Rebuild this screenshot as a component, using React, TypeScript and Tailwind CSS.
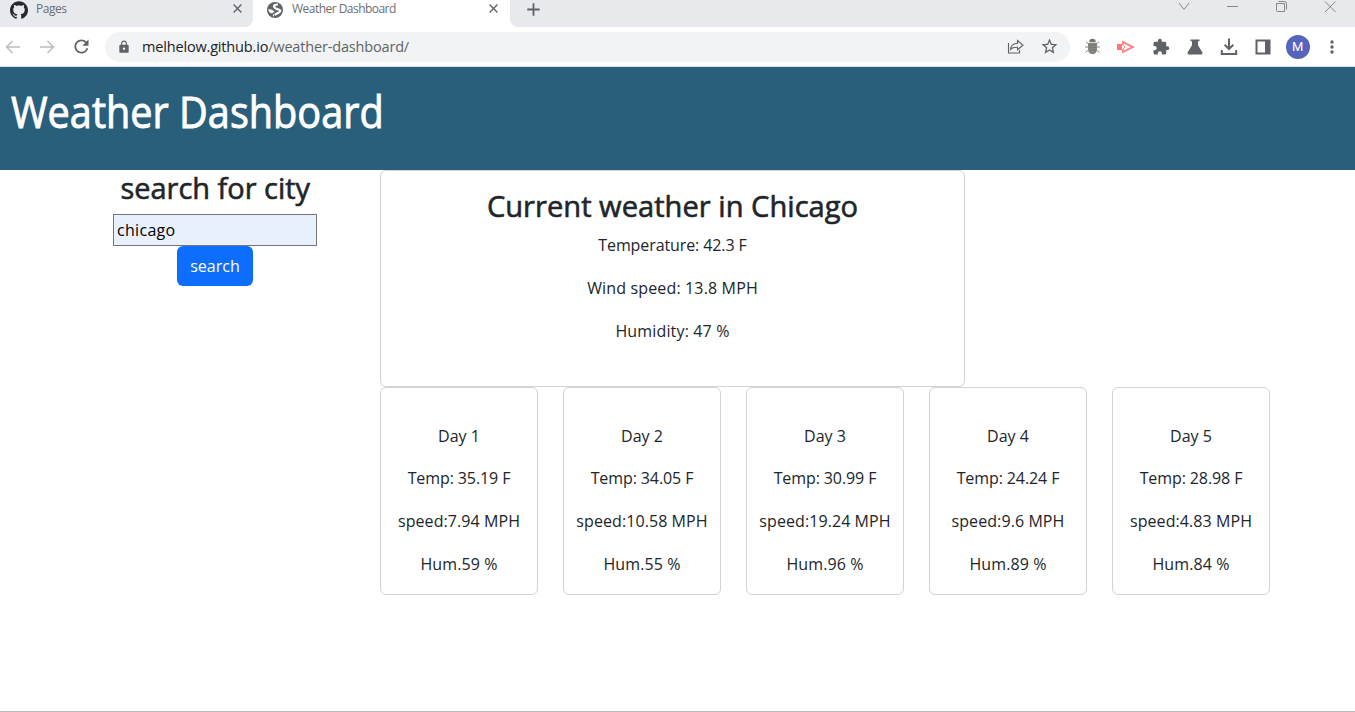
import { MdExtension, MdLock, MdRefresh, MdStarBorder } from 'react-icons/md';
import { SiGithub } from 'react-icons/si';

const days = [
  { day: 1, temp: '35.19', speed: '7.94', hum: 59 },
  { day: 2, temp: '34.05', speed: '10.58', hum: 55 },
  { day: 3, temp: '30.99', speed: '19.24', hum: 96 },
  { day: 4, temp: '24.24', speed: '9.6', hum: 89 },
  { day: 5, temp: '28.98', speed: '4.83', hum: 84 },
];

function CloseIcon() {
  return (
    <svg className="h-[9px] w-[9px] shrink-0" viewBox="0 0 9 9" fill="none" stroke="#5f6368" strokeWidth="1.4">
      <path d="M.6.6l7.8 7.8M8.4.6L.6 8.4" />
    </svg>
  );
}

function GlobeIcon() {
  return (
    <svg className="mt-[2px] h-[16px] w-[16px]" viewBox="0 0 16 16">
      <circle cx="8" cy="8" r="8" fill="#5f6368" />
      <path d="M11 2.500Q6.500 2.500 7 4.500T11.500 7.500 11 11 7 13.500" fill="none" stroke="#fff" strokeWidth="2.2" />
      <path d="M1.500 7Q5.500 7 7.500 9.500L5 11.500Q1.500 11 1.500 7z" fill="#fff" />
    </svg>
  );
}

function TabStrip() {
  return (
    <div className="flex h-[27px] text-[12px] text-[#6b6e72]">
      <div className="flex h-[27px] w-[253px] rounded-br-lg bg-[#e7e9ed] pt-px pl-2.5 pr-[11px]">
        <SiGithub className="h-[18px] w-[18px] text-[#24292f]" />
        <span className="ml-2 flex-1 leading-[16px] tracking-[-0.5px]">Pages</span>
        <div className="pt-[3px]"><CloseIcon /></div>
      </div>
      <div className="flex h-[27px] w-[257px] pl-[14px] pr-[12px]">
        <GlobeIcon />
        <span className="ml-[9px] flex-1 pt-px leading-[16px] tracking-[-0.53px]">Weather Dashboard</span>
        <div className="pt-1"><CloseIcon /></div>
      </div>
      <div className="flex h-[27px] flex-1 rounded-bl-lg bg-[#e7e9ed] pl-[17px]">
        <svg className="mt-[3px] h-[13px] w-[13px]" viewBox="0 0 13 13" stroke="#5f6368" strokeWidth="1.8">
          <path d="M6.5.3v12.4M.3 6.5h12.4" />
        </svg>
        <svg className="ml-auto h-[14px] w-[176px]" viewBox="0 0 176 14" fill="none" stroke="#85878b" strokeWidth="1">
          <path d="M0 3l5 6.500 5-6.500M48 6.500h11M97.500 3.500h8v8h-7q-1 0-1-1zM99.500 1.500h6q2 0 2 2v6M146 1.500l10.500 10.500M156.500 1.500L146 12" />
        </svg>
      </div>
    </div>
  );
}

function Toolbar() {
  return (
    <div className="flex h-10 items-center border-b border-[#dadce0] bg-white">
      <svg className="ml-[5px] h-4 w-[50px]" viewBox="0 0 50 16" fill="none" stroke="#babcbe" strokeWidth="1.5">
        <path d="M15 8H1.500M7.500 2l-6 6 6 6M35 8h13.500M42.500 2l6 6-6 6" />
      </svg>
      <MdRefresh className="ml-4 h-[21px] w-[21px] text-[#5f6368]" />
      <div className="ml-[13px] flex h-[30px] w-[965px] items-center rounded-full bg-[#f1f3f4] pl-[12px]">
        <MdLock className="h-[14px] w-[14px] text-[#5f6368]" />
        <div className="ml-[11px] flex-1 text-[14.5px] leading-5 tracking-[-0.17px] text-[#5f6368]">
          <span className="text-[#202124]">melhelow.github.io</span>/weather-dashboard/
        </div>
        <svg className="h-[15px] w-[17px]" viewBox="0 0 17 15" fill="none" stroke="#5f6368" strokeWidth="1.1">
          <path d="M1.500 4v10h11v-3M3.500 10.500C4 6.500 6.500 4.500 10.500 4.300V1.500l5.500 4.800-5.500 4.500V8.300C7 8.200 5 8.800 3.500 10.500z" />
        </svg>
        <MdStarBorder className="mr-[11px] ml-[16px] h-[19px] w-[19px] text-[#5f6368]" />
      </div>
      <div className="ml-[5px] grid w-[274px] grid-cols-8 place-items-center">
        <svg className="h-[17px] w-[17px]" viewBox="0 0 17 17">
          <g fill="none" stroke="#8b8b89" strokeWidth="1"><path d="M5 6L2 4M12 6l3-2M4 9H1M13 9h3M4.500 12l-3 2.500M12.500 12l3 2.500" /></g>
          <path d="M5.200 4.200Q5.200.800 8.500.800t3.300 3.400z" fill="#77776f" />
          <path d="M4 5h9v6q0 5-4.500 5.300Q4 16 4 11z" fill="#858581" />
          <path d="M5 7h7M5 9.500h7M5 12h7" stroke="#747470" strokeWidth=".7" />
        </svg>
        <svg className="h-[14px] w-[18px]" viewBox="0 0 18 14">
          <path d="M0 4h5v6H0z" fill="#ff7478" />
          <path d="M6 4.500V2L16 7 6 12V9.500" fill="none" stroke="#ff8587" strokeWidth="2" />
          <path d="M5 4l3 3-3 3" fill="none" stroke="#ff8587" strokeWidth="1" />
        </svg>
        <MdExtension className="h-[18px] w-[18px] text-[#5f6368]" />
        <svg className="h-4 w-4" viewBox="0 0 16 16" fill="#5f6368">
          <path d="M3.500.500h9v1.800H11v4l4.300 7q.7 2.200-1.300 2.200H2q-2 0-1.300-2.200l4.300-7v-4H3.500z" />
        </svg>
        <svg className="h-[18px] w-[18px]" viewBox="0 0 18 18" fill="none" stroke="#5f6368" strokeWidth="2">
          <path d="M9 .500v10M4.700 6.800L9 11l4.300-4.200M1.800 12v4h14.400v-4" />
        </svg>
        <svg className="h-4 w-4" viewBox="0 0 16 16" fill="#5f6368" fillRule="evenodd">
          <path d="M.500.500h15v15H.500zM2.500 2.500v11h7.500v-11z" />
        </svg>
        <div className="flex h-6 w-6 items-center justify-center rounded-full bg-[#5764bd] font-['Roboto',sans-serif] text-[13px] text-white">M</div>
        <svg className="h-[14px] w-1" viewBox="0 0 4 14" fill="#5f6368">
          <circle cx="2" cy="2" r="1.700" /><circle cx="2" cy="7" r="1.700" /><circle cx="2" cy="12" r="1.700" />
        </svg>
      </div>
    </div>
  );
}

export default function App() {
  return (
    <div className="flex h-[712px] w-[1355px] flex-col overflow-hidden border-b border-[#b3b8bb] bg-white font-['Open_Sans','Noto_Sans',sans-serif] text-[#212529]">
      <TabStrip />
      <Toolbar />
      <header className="h-[103px] shrink-0 bg-[#2a5f7b] pt-[19px] pl-[11px]">
        <h1 className="origin-left scale-x-[0.922] text-[43px] leading-[52px] text-white [-webkit-text-stroke:0.9px_white]">Weather Dashboard</h1>
      </header>
      <main className="flex">
        <section className="flex w-[380px] flex-col items-center pl-[50px]">
          <h2 className="h-11 scale-x-[0.965] text-[30px] leading-[36px] whitespace-nowrap [-webkit-text-stroke:0.6px_#212529]">search for city</h2>
          <input
            className="h-8 w-[204px] border border-[#767676] bg-[#e8f0fe] px-[3px] text-[16px] tracking-[0.3px] text-black"
            defaultValue="chicago"
          />
          <button className="h-10 w-[76px] rounded-md bg-[#0d6efd] text-[16px] text-white">search</button>
        </section>
        <section className="text-center text-[16px]">
          <div className="h-[217px] w-[585px] rounded-md border border-[#d2d3d3] pt-[17px]">
            <h2 className="scale-x-[0.971] text-[30px] leading-[36px] whitespace-nowrap [-webkit-text-stroke:0.6px_#212529]">Current weather in Chicago</h2>
            <div className="flex flex-col gap-[17px] pt-[8px] leading-[26px]">
              <p className="tracking-[-0.1px]">Temperature: 42.3 F</p>
              <p className="tracking-[0.15px]">Wind speed: 13.8 MPH</p>
              <p className="tracking-[0.15px]">Humidity: 47 %</p>
            </div>
          </div>
          <div className="flex gap-[25px]">
            {days.map((d) => (
              <div key={d.day} className="flex h-[208px] w-[158px] flex-col gap-[17px] rounded-md border border-[#d2d3d3] pt-[35px] leading-[26px] whitespace-nowrap">
                <p className="-mb-px">Day {d.day}</p>
                <p className="tracking-[-0.1px]">Temp: {d.temp} F</p>
                <p className="tracking-[0.08px]">speed:{d.speed} MPH</p>
                <p className="tracking-[0.1px]">Hum.{d.hum} %</p>
              </div>
            ))}
          </div>
        </section>
      </main>
    </div>
  );
}
